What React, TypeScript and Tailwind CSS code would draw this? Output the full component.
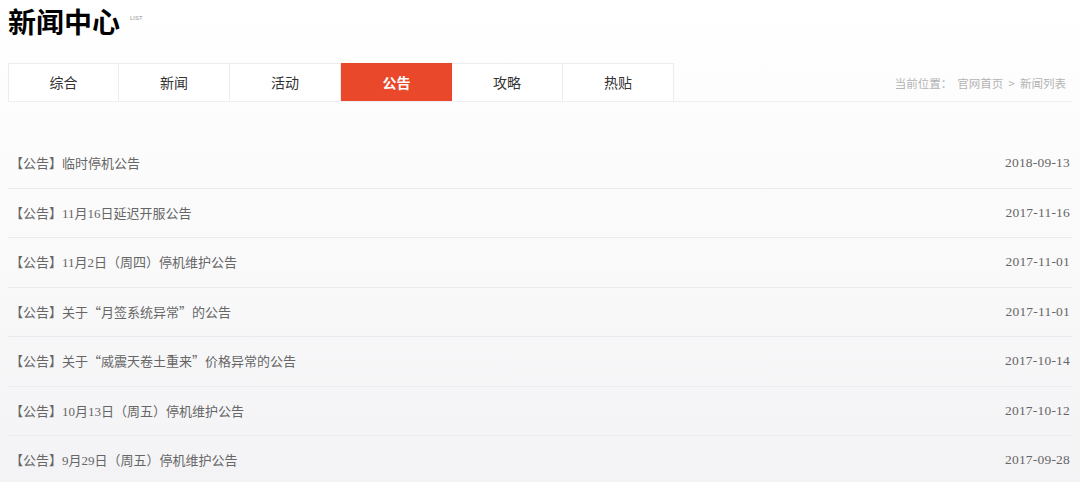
import React from "react";

const tabs = ["综合", "新闻", "活动", "公告", "攻略", "热贴"];
const items = [
  ["临时停机公告", "2018-09-13"],
  ["11月16日延迟开服公告", "2017-11-16"],
  ["11月2日（周四）停机维护公告", "2017-11-01"],
  ["关于“月签系统异常”的公告", "2017-11-01"],
  ["关于“威震天卷土重来”价格异常的公告", "2017-10-14"],
  ["10月13日（周五）停机维护公告", "2017-10-12"],
  ["9月29日（周五）停机维护公告", "2017-09-28"],
];

function Title({ text }: { text: string }) {
  const parts = text.split(/([“”])/);
  return (
    <>
      {parts.map((p, i) =>
        p === "“" || p === "”" ? (
          <span key={i} className="font-['Noto_Sans_CJK_SC',sans-serif] inline-block w-[13px] text-center">
            {p}
          </span>
        ) : (
          <React.Fragment key={i}>{p}</React.Fragment>
        )
      )}
    </>
  );
}

export default function App() {
  return (
    <div className="w-[1080px] h-[482px] overflow-hidden bg-gradient-to-b from-white via-[#fafafb] to-[#f3f3f5] font-['Noto_Sans_CJK_SC',sans-serif]">
      <div className="flex items-start pl-[8px] pt-[4px] h-[63px]">
        <h1 className="text-[28px] leading-[34px] font-bold text-black">新闻中心</h1>
        <span className="ml-[10px] mt-[10px] text-[6px] leading-[8px] text-[#999] font-['Liberation_Sans',sans-serif]">LIST</span>
      </div>
      <div className="mx-[8px] flex items-center justify-between border-b border-[#efeff1]">
        <div className="flex">
          {tabs.map((t, i) => (
            <div
              key={t}
              className={
                i === 3
                  ? "w-[111px] h-[38px] flex items-center justify-center text-[14px] font-bold text-white bg-[#e9482a]"
                  : "w-[111px] h-[38px] flex items-center justify-center text-[14px] text-[#333] bg-white border-t border-r border-[#ececee] " +
                    (i === 0 ? "border-l" : "")
              }
            >
              {t}
            </div>
          ))}
        </div>
        <div className="text-[11.5px] text-[#b3b3b3] pr-[6px] pt-[4px]">
          当前位置：&nbsp;&nbsp;官网首页&nbsp;&nbsp;&gt;&nbsp;&nbsp;新闻列表
        </div>
      </div>
      <div className="mx-[8px] mt-[37px]">
        {items.map(([title, date]) => (
          <div
            key={title + date}
            className="h-[49.5px] flex items-center justify-between border-b border-[#ebebed] pl-[2px] pr-[2px] text-[13px] text-[#666] font-['Liberation_Serif','Noto_Sans_CJK_SC',serif]"
          >
            <span>
              <span className="font-['Noto_Sans_CJK_SC',sans-serif]">【公告】</span>
              <Title text={title} />
            </span>
            <span className="text-[13.5px] tracking-[0.2px]">{date}</span>
          </div>
        ))}
      </div>
    </div>
  );
}
